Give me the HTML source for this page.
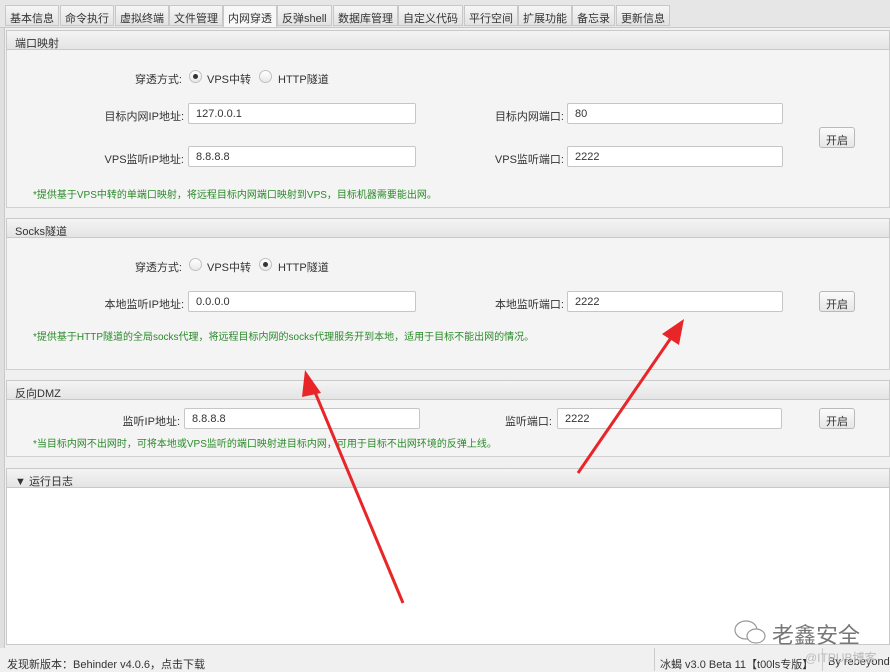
<!DOCTYPE html>
<html><head><meta charset="utf-8"><style>
*{box-sizing:border-box;margin:0;padding:0}
body{width:890px;height:671px;background:#f0f0f0;font-family:"Liberation Sans","Noto Sans CJK SC",sans-serif;font-size:11px;color:#333;position:relative;overflow:hidden}
.a{position:absolute}
.tab{position:absolute;top:5px;height:21px;border:1px solid #c8c8c8;background:linear-gradient(#f6f6f6,#e2e2e2);padding:4px 4px 0;font-size:11px;color:#333;white-space:nowrap}
.tab.sel{background:#f8f8f8;border-bottom:none;height:22px}
.hdr{position:absolute;left:6px;right:0;height:20px;background:linear-gradient(#f4f4f4,#e4e4e4);border:1px solid #c9c9c9;padding:4px 8px 0;font-size:11px}
.body{position:absolute;left:6px;right:0;background:#f4f4f4;border:1px solid #d0d0d0;border-top:none}
.inp{position:absolute;height:21px;background:#fff;border:1px solid #c6c6c6;border-radius:2px;padding:4px 7px 0;font-size:11px;line-height:13px}
.lbl{position:absolute;font-size:11px;text-align:right}
.btn{position:absolute;width:36px;height:21px;border:1px solid #b9b9b9;border-radius:3px;background:linear-gradient(#fbfbfb,#e6e6e6);font-size:11px;text-align:center;padding-top:4px}
.g{position:absolute;color:#2a8a2a;font-size:10px}
.r{position:absolute;width:13px;height:13px;border-radius:50%;border:1px solid #c0c0c0;background:linear-gradient(#fff,#e8e8e8)}
.r.on::after{content:"";position:absolute;left:3px;top:3px;width:5px;height:5px;border-radius:50%;background:#333}
</style></head><body>
<div class="a" style="left:0;top:0;width:890px;height:28px;background:#e6e6e6;border-bottom:1px solid #c8c8c8"></div>
<div class="tab" style="left:5px">基本信息</div>
<div class="tab" style="left:60px">命令执行</div>
<div class="tab" style="left:115px">虚拟终端</div>
<div class="tab" style="left:169px">文件管理</div>
<div class="tab sel" style="left:223px">内网穿透</div>
<div class="tab" style="left:277px">反弹shell</div>
<div class="tab" style="left:333px">数据库管理</div>
<div class="tab" style="left:398px">自定义代码</div>
<div class="tab" style="left:464px">平行空间</div>
<div class="tab" style="left:518px">扩展功能</div>
<div class="tab" style="left:572px">备忘录</div>
<div class="tab" style="left:616px">更新信息</div>
<div class="a" style="left:0;top:28px;width:5px;height:620px;background:#e0e0e0;border-right:1px solid #c8c8c8"></div>

<div class="hdr" style="top:30px">端口映射</div>
<div class="body" style="top:50px;height:158px"></div>
<div class="lbl" style="left:100px;top:71px;width:82px">穿透方式:</div>
<div class="r on" style="left:189px;top:70px"></div><div class="a" style="left:207px;top:71px">VPS中转</div>
<div class="r" style="left:259px;top:70px"></div><div class="a" style="left:278px;top:71px">HTTP隧道</div>
<div class="lbl" style="left:60px;top:108px;width:124px">目标内网IP地址:</div>
<div class="inp" style="left:188px;top:103px;width:228px">127.0.0.1</div>
<div class="lbl" style="left:440px;top:108px;width:124px">目标内网端口:</div>
<div class="inp" style="left:567px;top:103px;width:216px">80</div>
<div class="lbl" style="left:60px;top:151px;width:124px">VPS监听IP地址:</div>
<div class="inp" style="left:188px;top:146px;width:228px">8.8.8.8</div>
<div class="lbl" style="left:440px;top:151px;width:124px">VPS监听端口:</div>
<div class="inp" style="left:567px;top:146px;width:216px">2222</div>
<div class="btn" style="left:819px;top:127px">开启</div>
<div class="g" style="left:33px;top:186px">*提供基于VPS中转的单端口映射，将远程目标内网端口映射到VPS，目标机器需要能出网。</div>

<div class="hdr" style="top:218px">Socks隧道</div>
<div class="body" style="top:238px;height:132px"></div>
<div class="lbl" style="left:100px;top:259px;width:82px">穿透方式:</div>
<div class="r" style="left:189px;top:258px"></div><div class="a" style="left:207px;top:259px">VPS中转</div>
<div class="r on" style="left:259px;top:258px"></div><div class="a" style="left:278px;top:259px">HTTP隧道</div>
<div class="lbl" style="left:60px;top:296px;width:124px">本地监听IP地址:</div>
<div class="inp" style="left:188px;top:291px;width:228px">0.0.0.0</div>
<div class="lbl" style="left:440px;top:296px;width:124px">本地监听端口:</div>
<div class="inp" style="left:567px;top:291px;width:216px">2222</div>
<div class="btn" style="left:819px;top:291px">开启</div>
<div class="g" style="left:33px;top:328px">*提供基于HTTP隧道的全局socks代理，将远程目标内网的socks代理服务开到本地，适用于目标不能出网的情况。</div>

<div class="hdr" style="top:380px">反向DMZ</div>
<div class="body" style="top:400px;height:57px"></div>
<div class="lbl" style="left:60px;top:413px;width:120px">监听IP地址:</div>
<div class="inp" style="left:184px;top:408px;width:236px">8.8.8.8</div>
<div class="lbl" style="left:460px;top:413px;width:92px">监听端口:</div>
<div class="inp" style="left:557px;top:408px;width:225px">2222</div>
<div class="btn" style="left:819px;top:408px">开启</div>
<div class="g" style="left:33px;top:435px">*当目标内网不出网时，可将本地或VPS监听的端口映射进目标内网，可用于目标不出网环境的反弹上线。</div>

<div class="hdr" style="top:468px">▼ 运行日志</div>
<div class="a" style="left:6px;top:488px;width:884px;height:157px;background:#fff;border:1px solid #c9c9c9;border-top:none"></div>
<svg class="a" style="left:733px;top:618px" width="36" height="30"><ellipse cx="13" cy="12" rx="11" ry="9" fill="none" stroke="#999" stroke-width="1.2"/><ellipse cx="23" cy="18" rx="9" ry="7" fill="#fff" stroke="#999" stroke-width="1.2"/></svg>
<div class="a" style="left:772px;top:618px;font-size:22px;color:#777">老鑫安全</div>

<div class="a" style="left:0;top:648px;width:890px;height:23px;background:#f0f0f0"></div>
<div class="a" style="left:7px;top:656px;font-size:11px">发现新版本：Behinder v4.0.6，点击下载</div>
<div class="a" style="left:654px;top:648px;width:1px;height:23px;background:#ccc"></div>
<div class="a" style="left:660px;top:656px;font-size:11px">冰蝎 v3.0 Beta 11【t00ls专版】</div>
<div class="a" style="left:822px;top:648px;width:1px;height:23px;background:#ccc"></div>
<div class="a" style="left:828px;top:656px;font-size:11px">By rebeyond</div>
<div class="a" style="left:805px;top:649px;font-size:12px;color:#bbb">@ITPUB博客</div>

<svg class="a" style="left:0;top:0" width="890" height="671">
<g stroke="#e8262a" stroke-width="3" fill="#e8262a">
<line x1="403" y1="603" x2="312" y2="385"/>
<polygon points="305,370 321,393 302,397" stroke="none"/>
<line x1="578" y1="473" x2="675" y2="332"/>
<polygon points="684,319 679,345 662,334" stroke="none"/>
</g></svg>
</body></html>
